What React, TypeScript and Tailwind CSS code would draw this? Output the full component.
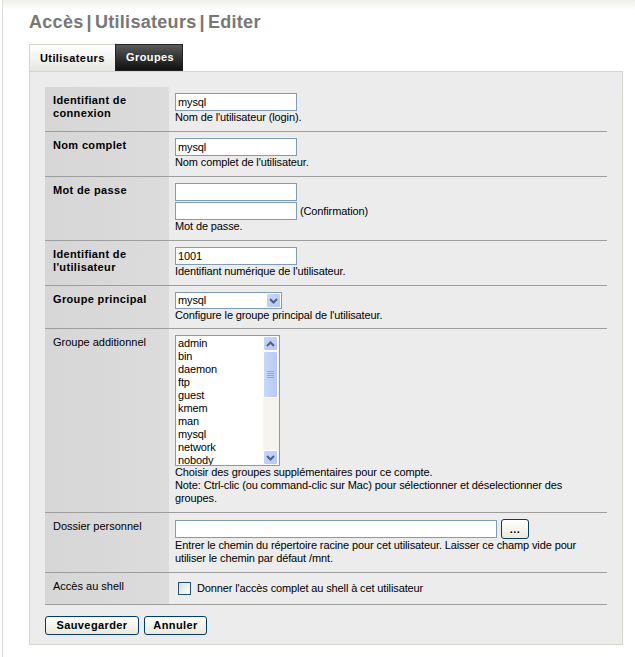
import React from "react";

const F = "font-['Liberation_Sans',Arial,sans-serif]";

function Label({ children, bold }: { children: React.ReactNode; bold?: boolean }) {
  return (
    <div
      className={`w-[124px] shrink-0 bg-gradient-to-r from-[#d6d6d6] to-[#dcdcdc] pl-2 pt-[7px] pr-1 leading-[13px] ${
        bold ? "font-bold tracking-[0.35px]" : ""
      }`}
    >
      {children}
    </div>
  );
}

function Row({
  label,
  bold,
  children,
  pt = "pt-[6px]",
  pb = "pb-[7px]",
}: {
  label: React.ReactNode;
  bold?: boolean;
  children: React.ReactNode;
  pt?: string;
  pb?: string;
}) {
  return (
    <div className="flex border-b border-[#9d9d9d]">
      <Label bold={bold}>{label}</Label>
      <div className={`flex-1 pl-[6px] pr-2 ${pt} ${pb} leading-[13px] tracking-[-0.12px]`}>{children}</div>
    </div>
  );
}

function TextInput({ value = "", w = "w-[122px]" }: { value?: string; w?: string }) {
  return (
    <div
      className={`${w} h-[18px] border border-[#7f9db9] bg-white pl-[2px] leading-[16px] text-black`}
    >
      {value}
    </div>
  );
}

function XpArrow({ dir }: { dir: "up" | "down" }) {
  return (
    <div className="w-[15px] h-[15px] rounded-[2px] border border-white bg-gradient-to-br from-[#c8d7fb] to-[#b4c8f6] flex items-center justify-center">
      <svg width="9" height="6" viewBox="0 0 9 6">
        <path
          d={dir === "down" ? "M1 1 L4.5 4.5 L8 1" : "M1 5 L4.5 1.5 L8 5"}
          stroke="#4d6185"
          strokeWidth="2"
          fill="none"
        />
      </svg>
    </div>
  );
}

function XpButton({ children, w, h = "h-[19px]" }: { children: React.ReactNode; w: string; h?: string }) {
  return (
    <div
      className={`${w} ${h} rounded-[3px] border border-[#003c74] bg-gradient-to-b from-white to-[#ece9d8] flex items-center justify-center font-bold text-black leading-none tracking-[0.4px]`}
    >
      {children}
    </div>
  );
}

export default function App() {
  const groups = ["admin", "bin", "daemon", "ftp", "guest", "kmem", "man", "mysql", "network", "nobody"];
  return (
    <div className={`min-h-[657px] w-[635px] bg-white ${F} text-[11px] text-black`}>
      <div className="ml-[2px] min-h-[657px] border-l border-[#dcdcdc] relative">
        <div className="absolute left-0 right-0 top-0 h-[10px] bg-gradient-to-b from-[#efefec] to-white" />
        <div className="relative pl-[26px] pr-[12px] pt-[11px]">
          <h1 className="text-[18px] font-bold text-[#777777] leading-[22px] tracking-[0.3px] flex">
            <span>Accès</span>
            <span className="mx-[3px]">|</span>
            <span>Utilisateurs</span>
            <span className="mx-[3px]">|</span>
            <span>Editer</span>
          </h1>
          <div className="mt-[11px] flex h-[27px]">
            <div className="w-[86px] border-t border-l border-[#d5d5cc] bg-gradient-to-b from-white to-[#e6e6e2] flex items-center pl-[10px] font-bold tracking-[0.4px]">
              Utilisateurs
            </div>
            <div className="w-[68px] border border-[#222] bg-gradient-to-b from-[#5a5a5a] to-[#111] flex items-center pl-[10px] font-bold text-white tracking-[0.4px]">
              Groupes
            </div>
          </div>
          <div className="w-[594px] border border-[#d5d5cc] bg-[#ececec] pt-[15px] pl-[15px] pr-[15px] pb-[9px]">
            <div>
              <Row
                bold
                label={
                  <>
                    Identifiant de
                    <br />
                    connexion
                  </>
                }
              >
                <TextInput value="mysql" />
                <div>Nom de l'utilisateur (login).</div>
              </Row>
              <Row bold label="Nom complet">
                <TextInput value="mysql" />
                <div>Nom complet de l'utilisateur.</div>
              </Row>
              <Row bold label="Mot de passe">
                <TextInput />
                <div className="flex items-end mt-px">
                  <TextInput />
                  <span className="ml-[3px] leading-[13px] mb-[2px]">(Confirmation)</span>
                </div>
                <div>Mot de passe.</div>
              </Row>
              <Row
                bold
                label={
                  <>
                    Identifiant de
                    <br />
                    l'utilisateur
                  </>
                }
              >
                <TextInput value="1001" />
                <div>Identifiant numérique de l'utilisateur.</div>
              </Row>
              <Row bold label="Groupe principal" pb="pb-[6px]">
                <div className="w-[107px] h-[17px] border border-[#7f9db9] bg-white flex items-center justify-between">
                  <span className="pl-[2px]">mysql</span>
                  <XpArrow dir="down" />
                </div>
                <div>Configure le groupe principal de l'utilisateur.</div>
              </Row>
              <Row label="Groupe additionnel">
                <div className="w-[105px] h-[131px] border border-[#7f9db9] bg-white flex">
                  <div className="flex-1 pl-[2px] pt-px leading-[13px] overflow-hidden">
                    {groups.map((g) => (
                      <div key={g}>{g}</div>
                    ))}
                  </div>
                  <div className="w-[16px] bg-[#f5f4ee] flex flex-col justify-between">
                    <div>
                      <XpArrow dir="up" />
                      <div className="w-[15px] h-[47px] rounded-[2px] border border-white bg-gradient-to-r from-[#c8d7fb] to-[#b6c9f6] flex flex-col items-center justify-center gap-[1px]">
                        <div className="w-[7px] h-px bg-[#8ea6e3]" />
                        <div className="w-[7px] h-px bg-[#8ea6e3]" />
                        <div className="w-[7px] h-px bg-[#8ea6e3]" />
                        <div className="w-[7px] h-px bg-[#8ea6e3]" />
                      </div>
                    </div>
                    <XpArrow dir="down" />
                  </div>
                </div>
                <div>Choisir des groupes supplémentaires pour ce compte.</div>
                <div>Note: Ctrl-clic (ou command-clic sur Mac) pour sélectionner et déselectionner des groupes.</div>
              </Row>
              <Row label="Dossier personnel">
                <div className="flex items-center gap-[4px] h-[20px]">
                  <TextInput w="w-[322px]" />
                  <XpButton w="w-[28px]" h="h-[20px]">...</XpButton>
                </div>
                <div>
                  Entrer le chemin du répertoire racine pour cet utilisateur. Laisser ce champ vide pour utiliser le
                  chemin par défaut /mnt.
                </div>
              </Row>
              <Row label="Accès au shell" pb="pb-[6px]">
                <div className="flex items-center h-[19px] pl-[3px]">
                  <div className="w-[13px] h-[13px] border border-[#1c5180] bg-gradient-to-br from-[#dcdcd7] to-white" />
                  <span className="ml-[6px]">Donner l'accès complet au shell à cet utilisateur</span>
                </div>
              </Row>
            </div>
            <div className="mt-[11px] flex gap-[5px]">
              <XpButton w="w-[94px]">Sauvegarder</XpButton>
              <XpButton w="w-[63px]">Annuler</XpButton>
            </div>
          </div>
        </div>
      </div>
    </div>
  );
}
